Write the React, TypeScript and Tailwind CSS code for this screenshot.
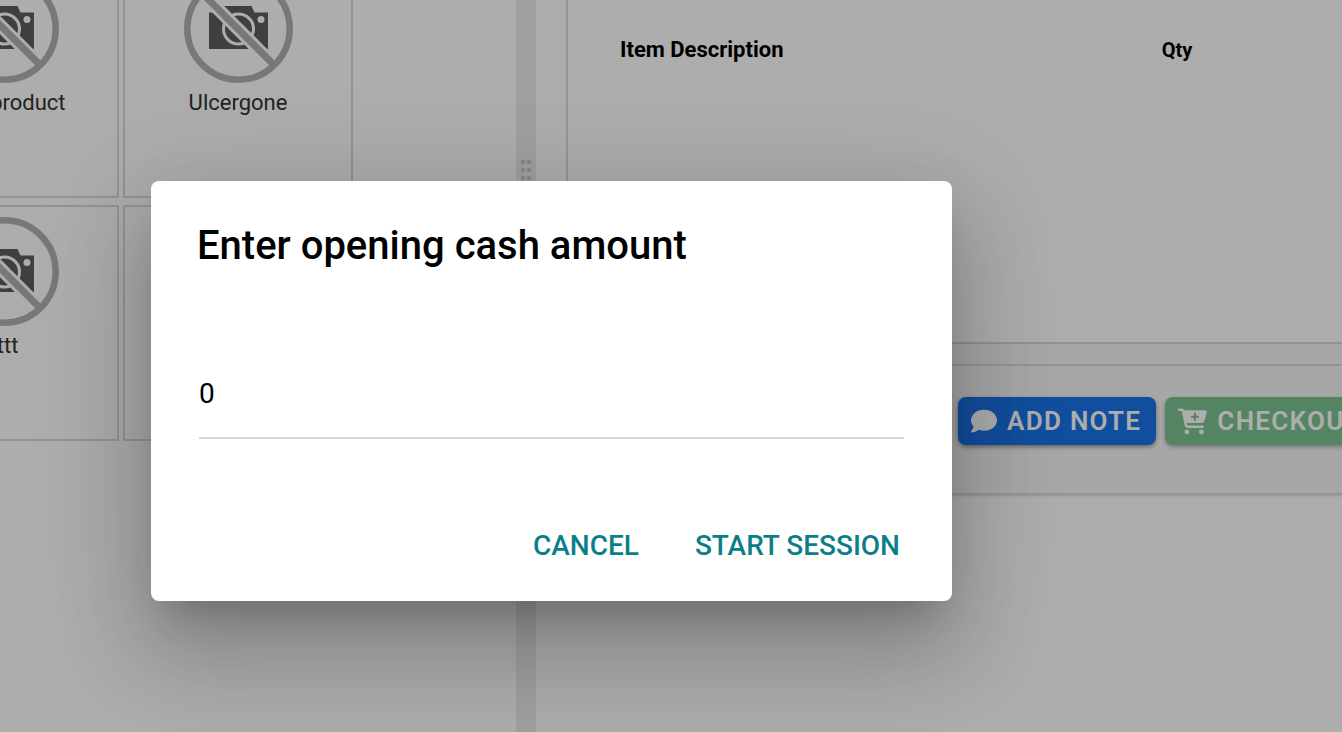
import { FaCartPlus, FaComment } from 'react-icons/fa6';

const products = ['Test product', 'Ulcergone', 'tttt', ''];

function NoImage() {
  return (
    <svg viewBox="0 0 110 110" className="size-[110px] shrink-0" aria-hidden="true">
      <path d="M26 38.5h8V32h34.5l3 6.5h13.5V75H26z" fill="#5d5d5d" />
      <circle cx="55.5" cy="55" r="15" fill="none" stroke="#fff" strokeWidth="3" />
      <circle cx="78" cy="45.5" r="3.5" fill="#fff" />
      <path d="M19 19 91 91" stroke="#fff" strokeWidth="13" />
      <path d="M19 19 90 90" stroke="#b2b2b2" strokeWidth="7" />
      <circle cx="55.5" cy="54.5" r="51.2" fill="none" stroke="#b2b2b2" strokeWidth="6.6" />
    </svg>
  );
}

function ProductTile({ name }: { name: string }) {
  return (
    <article className="flex h-[236px] flex-col items-center border-2 border-[#dadada] pt-[10px]">
      <NoImage />
      <h2 className="mt-1 text-[22px] leading-[30px] text-[#333]">{name}</h2>
    </article>
  );
}

function Splitter() {
  return (
    <div className="flex w-5 shrink-0 justify-center bg-[#ececec] pt-40">
      <div className="grid h-fit grid-cols-2 gap-x-0.5 gap-y-1">
        {Array.from({ length: 10 }, (_, i) => (
          <span key={i} className="size-1 bg-[#cbcbcb]" />
        ))}
      </div>
    </div>
  );
}

export default function App() {
  return (
    <div className="relative flex h-screen overflow-hidden bg-white font-['Roboto',sans-serif]">
      <main className="flex w-full">
        <section className="w-[516px] shrink-0 overflow-hidden" aria-label="Products">
          <div className="-mt-[38px] -ml-[111px] grid grid-cols-[230px_230px] gap-x-1 gap-y-[7px]">
            {products.map((name) => (
              <ProductTile key={name} name={name} />
            ))}
          </div>
        </section>

        <Splitter />

        <section className="min-w-0 flex-1 overflow-hidden pl-[30px]" aria-label="Cart">
          <div className="h-[344px] border-b-2 border-l-2 border-[#dadada] pt-[35px]">
            <table className="w-full table-fixed text-left text-black">
              <thead>
                <tr>
                  <th className="w-[70%] pl-[52px] text-[22px] leading-[30px] font-bold">Item Description</th>
                  <th className="pl-[52px] text-xl leading-[30px] font-bold">Qty</th>
                </tr>
              </thead>
            </table>
          </div>
          <div className="bg-[#f6f6f6] pt-5 shadow-sm">
            <div className="flex gap-[9px] border-y-2 border-[#dadada] pt-[31px] pb-12 pl-[392px] text-[26px] leading-8 font-semibold tracking-wider text-white">
              <button className="flex h-12 shrink-0 items-center gap-2.5 rounded-lg bg-[#1a73e8] pr-[15px] pl-[13px] shadow-[0_2px_4px_rgba(0,0,0,0.4)]">
                <FaComment className="size-[26px]" />
                ADD NOTE
              </button>
              <button className="flex h-12 shrink-0 items-center gap-2.5 rounded-lg bg-[#7cc492] pr-[15px] pl-[13px] shadow-[0_2px_4px_rgba(0,0,0,0.3)]">
                <FaCartPlus className="size-[29px]" />
                CHECKOUT
              </button>
            </div>
          </div>
        </section>
      </main>

      <div className="absolute inset-0 bg-black/32 pt-[181px] pl-[151px]">
        <form
          role="dialog"
          aria-labelledby="dialog-title"
          className="flex w-[801px] max-w-full flex-col rounded-lg bg-white pb-[23px] shadow-[0_26px_36px_-16px_rgba(0,0,0,0.2),0_56px_90px_8px_rgba(0,0,0,0.14),0_22px_108px_18px_rgba(0,0,0,0.12)]"
        >
          <h1 id="dialog-title" className="px-[46px] pt-[41px] text-[40px] leading-12 font-medium text-black">
            Enter opening cash amount
          </h1>
          <div className="px-12 pt-20">
            <input
              type="text"
              inputMode="decimal"
              aria-labelledby="dialog-title"
              defaultValue="0"
              className="h-[89px] w-full border-b-2 border-[#d9d9d9] text-[28px] text-black outline-none"
            />
          </div>
          <div className="flex justify-end gap-4 pt-[75px] pr-8 text-[28px] font-medium text-[#0b7f87]">
            <button type="button" className="h-16 px-5">CANCEL</button>
            <button type="button" className="h-16 px-5">START SESSION</button>
          </div>
        </form>
      </div>
    </div>
  );
}
